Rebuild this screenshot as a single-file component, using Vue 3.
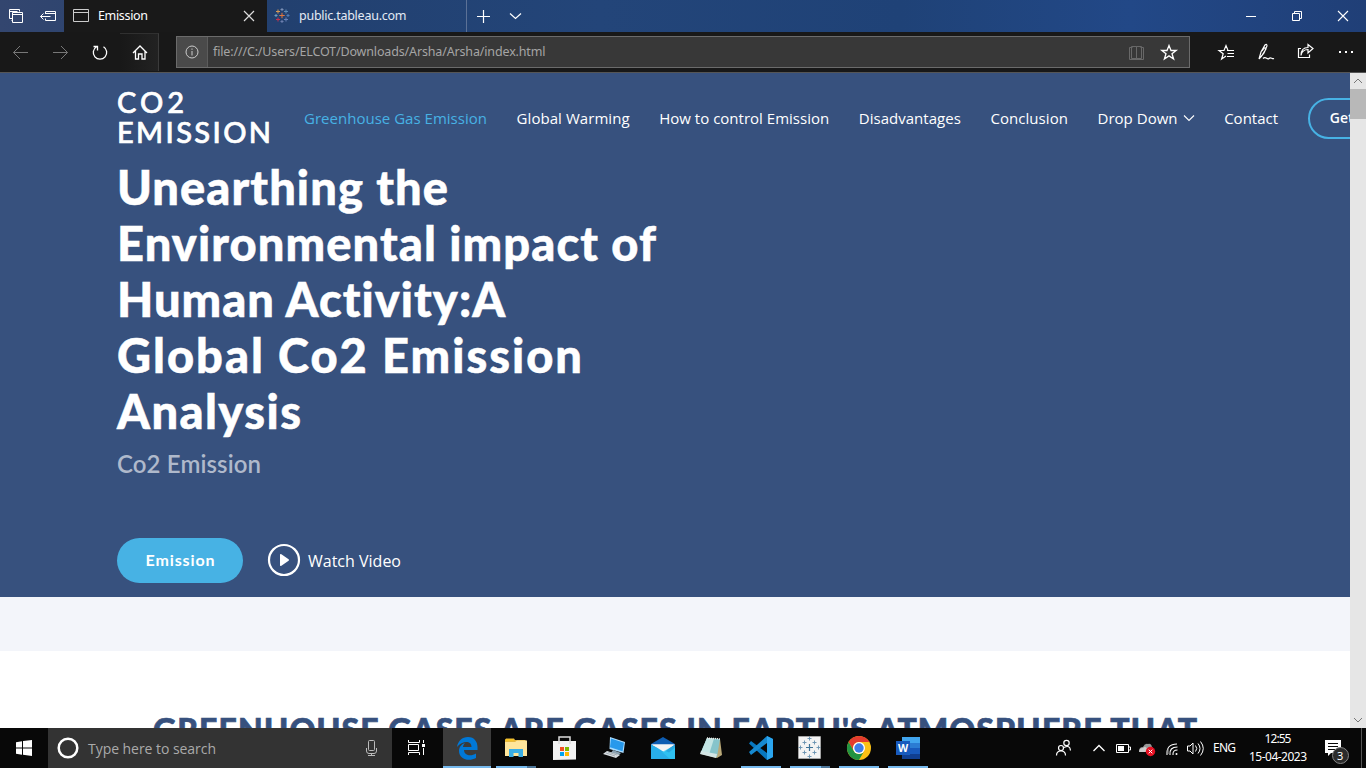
<script setup>
const fitText = (el, width) => {
  const count = el.textContent.trim().length
  el.style.letterSpacing = '0px'
  const natural = el.getBoundingClientRect().width
  el.style.letterSpacing = (width - natural) / (count - 1) + 'px'
  el.style.marginRight = -(width - natural) / (count - 1) + 'px'
}
const vFit = { mounted: (el, binding) => fitText(el, binding.value) }

const headline = [
  ['Unearthing the', 331],
  ['Environmental impact of', 539],
  ['Human Activity:A', 389],
  ['Global Co2 Emission', 465],
  ['Analysis', 184]
]
const links = [
  { label: 'Greenhouse Gas Emission', width: 183, active: true },
  { label: 'Global Warming', width: 113 },
  { label: 'How to control Emission', width: 170 },
  { label: 'Disadvantages', width: 102 },
  { label: 'Conclusion', width: 77.5 },
  { label: 'Drop Down', width: 80, menu: true },
  { label: 'Contact', width: 54 }
]
const petals = [[0, -9, 2], [0, 9, 2], [-9, 0, 2], [9, 0, 2], [-5, -5, 2], [5, -5, 2], [-5, 5, 2], [5, 5, 2]]
const tabPetals = [
  [0, -6, 1.5, '#7b8fb5'], [0, 6, 1.5, '#6c7fae'], [-6, 0, 1.5, '#6f9fc0'], [6, 0, 1.5, '#4f7cb8'],
  [-4, -4, 2, '#d99a55'], [4, -4, 2, '#5c8bb4'], [-4, 4, 2, '#c7304d'], [4, 4, 2, '#6680b8'], [0, 0, 2.7, '#e0773f']
]
const plus = (x, y, r) => `M${x - r} ${y}h${r * 2}M${x} ${y - r}v${r * 2}`
</script>

<template>
  <div class="screen">
    <div class="tabs">
      <div class="tab-tools">
        <svg width="64" height="32" viewBox="0 0 64 32" fill="none" stroke="#fff">
          <path d="M12.500 18.500h-3v-9h10v2M9.500 11.500h8M12.500 20.500h-1M12.500 12.500h10v10h-10zM12.500 14.500h10M40.500 16.500h10M43.500 13.500l-3 3 3 3M45.500 14v-2.500h10v9h-10v-2M45.500 13.500h10" />
        </svg>
      </div>
      <div class="tab active">
        <svg width="18" height="32" viewBox="72 0 18 32" fill="none" stroke="#ccc"><path d="M73.500 9.500h15v12h-15zM73.500 12.500h15" /></svg>
        <span v-fit="50" class="tab-label">Emission</span>
        <svg class="push" width="12" height="32" viewBox="243 0 12 32" fill="none" stroke="#ddd" stroke-width="1.2"><path d="M244 11l10 10M254 11l-10 10" /></svg>
      </div>
      <div class="tab other">
        <svg width="18" height="32" viewBox="-9 -15.500 18 32" fill="none">
          <path v-for="(p, i) in tabPetals" :key="i" :d="plus(p[0], p[1], p[2])" :stroke="p[3]" />
        </svg>
        <span v-fit="107.500" class="tab-label">public.tableau.com</span>
      </div>
      <svg width="65" height="32" viewBox="467 0 65 32" fill="none" stroke="#fff" stroke-width="1.2"><path d="M477 16.500h13M483.500 10v13M510 13.500l5.500 5 5.500-5" /></svg>
      <svg class="push" width="138" height="32" viewBox="1228 0 138 32" fill="none" stroke="#fff"><path d="M1246 16.500h10M1292.500 13.500h7v7h-7zM1294.500 13.500v-2h7v7h-2" /><path d="M1338 11l10 10M1348 11l-10 10" stroke-width="1.100" /></svg>
    </div>

    <div class="toolbar">
      <svg width="120" height="38" viewBox="0 33 120 38" fill="none"><path d="M28 52.500H13.500M20 46l-6.500 6.500L20 59M53 52.500h14.500M61 46l6.500 6.500L61 59" stroke="#777" /><path d="M96.500 46.800a6.700 6.700 0 1 0 7 0M93.500 46.500h4v4" stroke="#fff" stroke-width="1.300" /></svg>
      <div class="home"><svg width="39" height="38" viewBox="120 33 39 38" fill="none" stroke="#fff" stroke-width="1.300"><path d="M133 53l7-7 7 7M135.500 51v8h3v-5h3.500v5h3v-8" /></svg></div>
      <div class="address">
        <div class="info"><svg width="14" height="14" viewBox="0 0 14 14" fill="none" stroke="#ccc"><circle cx="7" cy="7" r="6" /><path d="M7 6v4.500M7 3.500v1.300" /></svg></div>
        <span v-fit="332.500" class="url">file:///C:/Users/ELCOT/Downloads/Arsha/Arsha/index.html</span>
        <svg class="push" width="62" height="30" viewBox="1127 37 62 30" fill="none"><path d="M1132.500 47.500h-3v12h14v-12h-3M1131.500 46.500h5v12h-5zM1136.500 46.500h5v12h-5z" stroke="#686868" /><path d="M1169 45.500l2 5h5.200l-4.200 3.300 1.600 5.200-4.600-3.100-4.600 3.100 1.600-5.200-4.200-3.300h5.200z" stroke="#fff" stroke-width="1.300" /></svg>
      </div>
      <svg class="tools" width="160" height="38" viewBox="1206 33 160 38" fill="none" stroke="#fff" stroke-width="1.200">
        <path d="M1233 50.500h-5l-2-5-2 5h-5l4.200 3.300-1.600 5.200 4.400-3M1227 50.500h7M1227.500 53.500h6.500M1227 56.500h7" />
        <path d="M1259 59l2-7 4-7q2-1.500 2 1l-3 7-5 6M1262 51q3-5 4-2l-5 8M1263 58.500c3-3 4 2 6 0s3 1 5 0" />
        <path d="M1301 48.500h-2.500v9h11v-3M1301 55.500q1-6 7-6v3.500l5-4.500-5-4v3q-7 0-7 8z" />
        <path d="M1339 52h2M1345 52h2M1351 52h2" stroke-width="2" />
      </svg>
    </div>

    <div class="view">
      <div class="page">
        <section class="hero">
          <nav class="nav">
            <div class="logo"><div><span v-fit="67">CO2</span></div><div><span v-fit="154">EMISSION</span></div></div>
            <a v-for="l in links" :key="l.label" :class="{ current: l.active }"><span v-fit="l.width">{{ l.label }}</span><svg v-if="l.menu" width="12" height="12" viewBox="0 0 12 12" fill="none" stroke="#fff" stroke-width="1.100"><path d="M1 3.500l5 5 5-5" /></svg></a>
            <button class="start">Get Started</button>
          </nav>
          <h1><span v-for="h in headline" :key="h[0]" class="line"><span v-fit="h[1]">{{ h[0] }}</span></span></h1>
          <h2><span v-fit="144">Co2 Emission</span></h2>
          <div class="actions">
            <button class="primary"><span v-fit="69">Emission</span></button>
            <svg width="34" height="34" viewBox="0 0 34 34"><circle cx="17" cy="17" r="15" fill="none" stroke="#fff" stroke-width="2.200" /><path d="M13 12v10q0 1.700 1.400.700l7.200-4.900q1-.800 0-1.600l-7.200-4.900q-1.400-.900-1.400.700z" fill="#fff" /></svg>
            <span v-fit="93" class="watch">Watch Video</span>
          </div>
        </section>
        <section class="band"></section>
        <section class="about"><h3><span v-fit="1044">GREENHOUSE GASES ARE GASES IN EARTH'S ATMOSPHERE THAT</span></h3></section>
      </div>
      <div class="scrollbar">
        <svg width="16" height="16" viewBox="0 0 16 16" fill="none" stroke="#777"><path d="M4 10l4-4 4 4" /></svg>
        <div class="thumb"></div>
        <svg class="down" width="16" height="16" viewBox="0 0 16 16" fill="none" stroke="#777"><path d="M4 6l4 4 4-4" /></svg>
      </div>
    </div>

    <div class="taskbar">
      <svg width="48" height="40" viewBox="0 728 48 40" fill="#fff"><path d="M16 742.200l6-1v6.300H16zM23 741.100l9-1.200v7.600h-9zM16 748.500h6v6.200l-6-.9zM23 748.500h9v7.500l-9-1.200z" /></svg>
      <div class="search">
        <svg width="40" height="40" viewBox="0 0 40 40" fill="none"><circle cx="20" cy="20" r="9.300" stroke="#fff" stroke-width="2.500" /></svg>
        <span v-fit="128">Type here to search</span>
        <svg class="push" width="41" height="40" viewBox="351 728 41 40" fill="none" stroke="#bbb"><rect x="368.500" y="740.500" width="6" height="10" rx="1" /><path d="M366.500 748v3q0 2.500 2.500 2.500h5q2.500 0 2.500-2.500v-3M371.500 754v2M368 755.500h7" /></svg>
      </div>
      <svg width="51" height="40" viewBox="392 728 51 40" fill="none" stroke="#fff"><path d="M408.500 740v2.500h11V740M408.500 755v-2.500h11v2.500M408.500 744.500h10v6h-10zM423.500 740v3M423.500 748v7" /><path d="M422 744h3v3h-3z" fill="#fff" stroke="none" /></svg>
      <div class="app focused"><svg viewBox="443 728 48 40"><path d="M457 747c1-6 5-10 11-10 6.500 0 9.500 5 9.500 10v3h-13.500c.3 6 7.500 6.500 12 3.500v4.500c-7 3.800-17 1.500-17-7 0-4 2.500-7 6-8-1.300 1.300-1.800 2.500-2 4h8.500c0-7-9.500-6-14.500 0z" fill="#0078d7" /></svg></div>
      <div class="app run multi"><svg viewBox="492 728 48 40"><path d="M505 740l1-1.500h8l1 1.500h10.500v16H505z" fill="#e8b93d" /><path d="M505 742h10l2-1.500h10V756h-22z" fill="#ffe69b" /><path d="M505.500 739h8v2h-8z" fill="#f5c227" /><path d="M509 757v-8h14v8h-4.500v-4h-5v4z" fill="#3aaee5" /></svg></div>
      <div class="app"><svg viewBox="541 728 48 40"><path d="M553 741h23v18.500l-23 .5z" fill="#f3f3f3" /><path d="M559 744v-7h11v7" fill="none" stroke="#ddd" stroke-width="1.500" /><path d="M560 747h4v4h-4z" fill="#f25022" /><path d="M565 747h4v4h-4z" fill="#7fba00" /><path d="M560 752h4v4h-4z" fill="#00a4ef" /><path d="M565 752h4v4h-4z" fill="#ffb900" /></svg></div>
      <div class="app"><svg viewBox="590 728 48 40"><path d="M610 737l15 5-1.500 11-14-4z" fill="#aadcff" /><path d="M611 738.500l13 4.200-1.500 8.500-12.500-4z" fill="#2799ec" /><path d="M613 750l8 3-2 2-8-2z" fill="#8ba1b0" /><path d="M607 751l13 4-4 3-13-4z" fill="#d9dee2" /><path d="M606 753l9 3M608 752l9 3" stroke="#8f9ba3" stroke-width=".7" /></svg></div>
      <div class="app"><svg viewBox="639 728 48 40"><path d="M651 744l12-7 12 7v15h-24z" fill="#0e5db2" /><path d="M651 744.500h24l-12 8z" fill="#f4f4f4" /><path d="M651 744.500l18 8 6-5v11.500h-24z" fill="#28aee9" /><path d="M652 744.500h22l-10 7.500z" fill="#f4f4f4" /><path d="M675 745v14h-5l-8-7z" fill="#32c9f5" opacity=".7" /></svg></div>
      <div class="app"><svg viewBox="688 728 48 40"><path d="M707 738l13 1 2 16-5 3-16-4z" fill="#b9a878" /><path d="M707 738l13 1-3 18-16-5z" fill="#86c4cb" /><path d="M707 738l7 .500-5 16-8-2.500z" fill="#c4e5e4" /><path d="M701 751l16 3-1 4-16-4z" fill="#d3e5e5" /><path d="M707 738l13 1" stroke="#eee" stroke-width="1.500" stroke-dasharray="1 1" /></svg></div>
      <div class="app run"><svg viewBox="737 728 48 40"><path d="M767 736l6 3v18l-6 3-18-16.500 2-2.500 16 12z" fill="#0877bf" /><path d="M751 755l-2-3 18-16v7z" fill="#1689d0" /><path d="M767 736l6 3v18l-6 3z" fill="#2ba5ef" /></svg></div>
      <div class="app run multi"><svg viewBox="-23.500 -19.500 48 40"><path d="M-11-11h22v22h-22z" fill="#f3f3f3" stroke="#ccc" stroke-width=".5" /><path v-for="(p, i) in petals" :key="i" :d="plus(p[0], p[1], p[2])" stroke="#6791b0" stroke-width=".9" /><path :d="plus(0, 0, 3.5)" stroke="#3d7398" stroke-width="1.200" /></svg></div>
      <div class="app run"><svg viewBox="-24 -20 48 40"><circle r="12" fill="#fbc116" /><path d="M-10.400-6A12 12 0 0 1 10.400-6H0A6 6 0 0 0-5.200 3z" fill="#e33b2e" /><path d="M-10.400-6A12 12 0 0 0 0 12L5.200 3A6 6 0 0 1-5.200 3z" fill="#229342" /><circle r="6" fill="#fff" /><circle r="4.700" fill="#3e7de8" /></svg></div>
      <div class="app run"><svg viewBox="884 728 48 40"><path d="M902 737h18v22h-18z" fill="#185abd" /><path d="M902 737h18v6h-18z" fill="#41a5ee" /><path d="M902 743h18v5h-18z" fill="#2b7cd3" /><path d="M902 754h18v5h-18z" fill="#103f91" /><path d="M896 741h14v14h-14z" fill="#185abd" /><text x="903" y="752" text-anchor="middle" class="word">W</text></svg></div>

      <div class="tray">
        <svg width="156" height="40" viewBox="1051 728 156 40" fill="none" stroke="#fff">
          <g stroke-width="1.200"><circle cx="1061" cy="748" r="2.500" /><path d="M1056.500 755.500q0-4.500 4.500-4.500t4.500 4.500" /><circle cx="1066.500" cy="743" r="2.700" /><path d="M1064 747.500q6-3 6.500 3" /></g>
          <path d="M1093.500 751l5.500-5.500 5.500 5.500" stroke-width="1.300" />
          <path d="M1116.500 744.500h12v8h-12zM1129 747h1.500v3h-1.500" /><path d="M1118 746h6v5h-6z" fill="#fff" stroke="none" />
          <path d="M1141 752q-3-1-1-4 1-1 3-1 2-4 5-3 3-1 4 3 2 1 1 5z" fill="#999" stroke="none" /><path d="M1139 752q0-4 4-4 3-3 6 4z" fill="#ccc" stroke="none" /><circle cx="1150.500" cy="751.500" r="4.700" fill="#e81123" stroke="none" /><path d="M1148.700 749.700l3.600 3.600M1152.300 749.700l-3.600 3.600" />
          <g stroke-width="1.100"><path d="M1167 755q-1-11 10-11M1170 755q-1-8 7.500-8M1173 755q-.5-5 4.500-5" /><path d="M1168 748v6" stroke="#999" /><circle cx="1176.500" cy="754" r="1" fill="#fff" stroke="none" /></g>
          <path d="M1187.500 746v5h2.500l3 3v-11l-3 3zM1195.500 745.500q2.500 3 0 6M1198 743.500q4 5 0 10M1200.500 741.500q5.500 7 0 14" />
        </svg>
        <div class="lang"><span v-fit="23">ENG</span></div>
        <div class="clock"><div><span v-fit="27">12:55</span></div><div><span v-fit="58">15-04-2023</span></div></div>
        <div class="notice">
          <svg width="47" height="40" viewBox="1314 728 47 40"><path d="M1325 740h16v13h-10l-3 3v-3h-3z" fill="#fff" /><path d="M1328 743.500h10M1328 746.500h10M1328 749.500h7" stroke="#080808" /><circle cx="1340.500" cy="755.500" r="8" fill="#2b2b2b" stroke="#858585" /></svg>
          <span>3</span>
        </div>
        <div class="edge"></div>
      </div>
    </div>
  </div>
</template>

<style>
body { margin: 0; overflow: hidden; }
</style>

<style scoped>
.screen { width: 1366px; height: 768px; display: flex; flex-direction: column; overflow: hidden; font-family: "Open Sans", sans-serif; background: #fff; }
svg { display: block; flex: none; }
span { white-space: nowrap; }
.push { margin-left: auto; }
.tabs { height: 32px; display: flex; flex: none; background: linear-gradient(90deg, #33466f 0, #22406f 280px, #234579 600px, #1f4277 900px, #224887 1130px, #203f77 1366px); }
.tab-tools { width: 64px; }
.tab { display: flex; align-items: center; box-sizing: border-box; height: 32px; }
.tab-label { font-family: "Noto Sans", sans-serif; font-size: 12.500px; line-height: 30px; margin-left: 8px; color: #fff; }
.active { width: 203px; background: #191919; padding: 0 12px 0 8px; }
.other { width: 200px; padding-left: 6px; border-right: 1px solid #5c7196; }
.other .tab-label { color: #e4eaf4; }
.toolbar { height: 41px; flex: none; display: flex; align-items: center; background: #181818; border-bottom: 1px solid #555; box-sizing: border-box; }
.home { width: 39px; height: 38px; box-sizing: border-box; border-right: 1px solid #3b3b3b; border-top: 1px solid #303030; background: linear-gradient(90deg, #181818, #222); }
.home svg { margin-top: -1px; }
.address { width: 1014px; height: 32px; box-sizing: border-box; margin-left: 17px; border: 1px solid #6b6b6b; background: #383838; display: flex; align-items: center; }
.info { width: 30px; height: 30px; background: #4a4a4a; border-right: 1px solid #5c5c5c; display: flex; align-items: center; justify-content: center; }
.url { margin-left: 5px; font-family: "Noto Sans", sans-serif; font-size: 12.500px; line-height: 30px; color: #a5a5a5; }
.tools { margin-left: 16px; }
.view { height: 655px; flex: none; display: flex; overflow: hidden; }
.page { width: 1350px; overflow: hidden; }
.hero { height: 524px; background: #37517e; color: #fff; padding-left: 117px; overflow: hidden; }
.nav { height: 91px; width: 1400px; display: flex; align-items: center; font-size: 15px; }
.logo { width: 187px; flex: none; font: 500 29px/30px Lato, sans-serif; -webkit-text-stroke: 0.7px #fff; padding-bottom: 4px; }
.nav a { display: flex; align-items: center; margin-right: 29.600px; padding-bottom: 2px; }
.nav a svg { margin-left: 5px; }
.nav .current { color: #47b2e4; }
.start { height: 41px; width: 130px; box-sizing: border-box; border: 2px solid #47b2e4; border-radius: 21px; background: none; color: #fff; font: 600 14px "Open Sans", sans-serif; padding: 0 0 2px 20px; text-align: left; }
h1 { margin: -5px 0 0; font: 900 47px/56px Lato, sans-serif; -webkit-text-stroke: 0.5px #fff; }
.line { display: block; height: 56px; }
h2 { margin: 10px 0 0; font: 600 24px/29px Lato, sans-serif; color: #afb9cb; }
.actions { display: flex; align-items: center; margin-top: 60px; height: 45px; }
.primary { width: 126px; height: 45px; border: 0; border-radius: 23px; background: #47b2e4; color: #fff; font: 700 16px Lato, sans-serif; padding: 0 0 2px; margin-right: 24px; }
.actions svg { margin-top: -1px; }
.watch { font-size: 16px; margin-left: 7px; }
.band { height: 54px; background: #f3f5fa; }
.about { height: 77px; background: #fff; overflow: hidden; }
h3 { margin: 60px 0 0 153px; font: 900 32px/38px Lato, sans-serif; color: #37517e; -webkit-text-stroke: 0.7px #37517e; }
.scrollbar { width: 16px; background: #e6e6e6; display: flex; flex-direction: column; }
.thumb { height: 30px; background: #b8b8b8; }
.down { margin-top: auto; }
.taskbar { height: 40px; flex: none; display: flex; background: #080808; color: #fff; }
.search { width: 344px; height: 40px; display: flex; align-items: center; background: #333; color: #aaa; font-size: 14px; }
.app { width: 48px; height: 40px; margin-right: 1px; display: grid; }
.app svg { width: 48px; height: 40px; grid-area: 1 / 1; }
.app::after { content: ""; grid-area: 1 / 1; align-self: end; height: 2px; margin: 0 4px; }
.run::after { background: #76b9ed; }
.multi::after { background: linear-gradient(90deg, #76b9ed 31px, #4d7699 31px); }
.focused { background: #3b3b3b; }
.focused::after { margin: 0; background: #76b9ed; }
.word { font: 700 10.500px "Open Sans", sans-serif; fill: #fff; }
.tray { display: flex; margin-left: auto; font: 12px "Noto Sans", sans-serif; }
.lang { width: 35px; line-height: 39px; padding-left: 6px; box-sizing: border-box; }
.clock { width: 72px; line-height: 18px; padding-top: 2px; text-align: center; }
.notice { width: 47px; position: relative; }
.notice span { position: absolute; left: 23px; top: 19px; font-size: 11px; line-height: 17px; }
.edge { width: 4px; border-left: 1px solid #555; }
</style>
